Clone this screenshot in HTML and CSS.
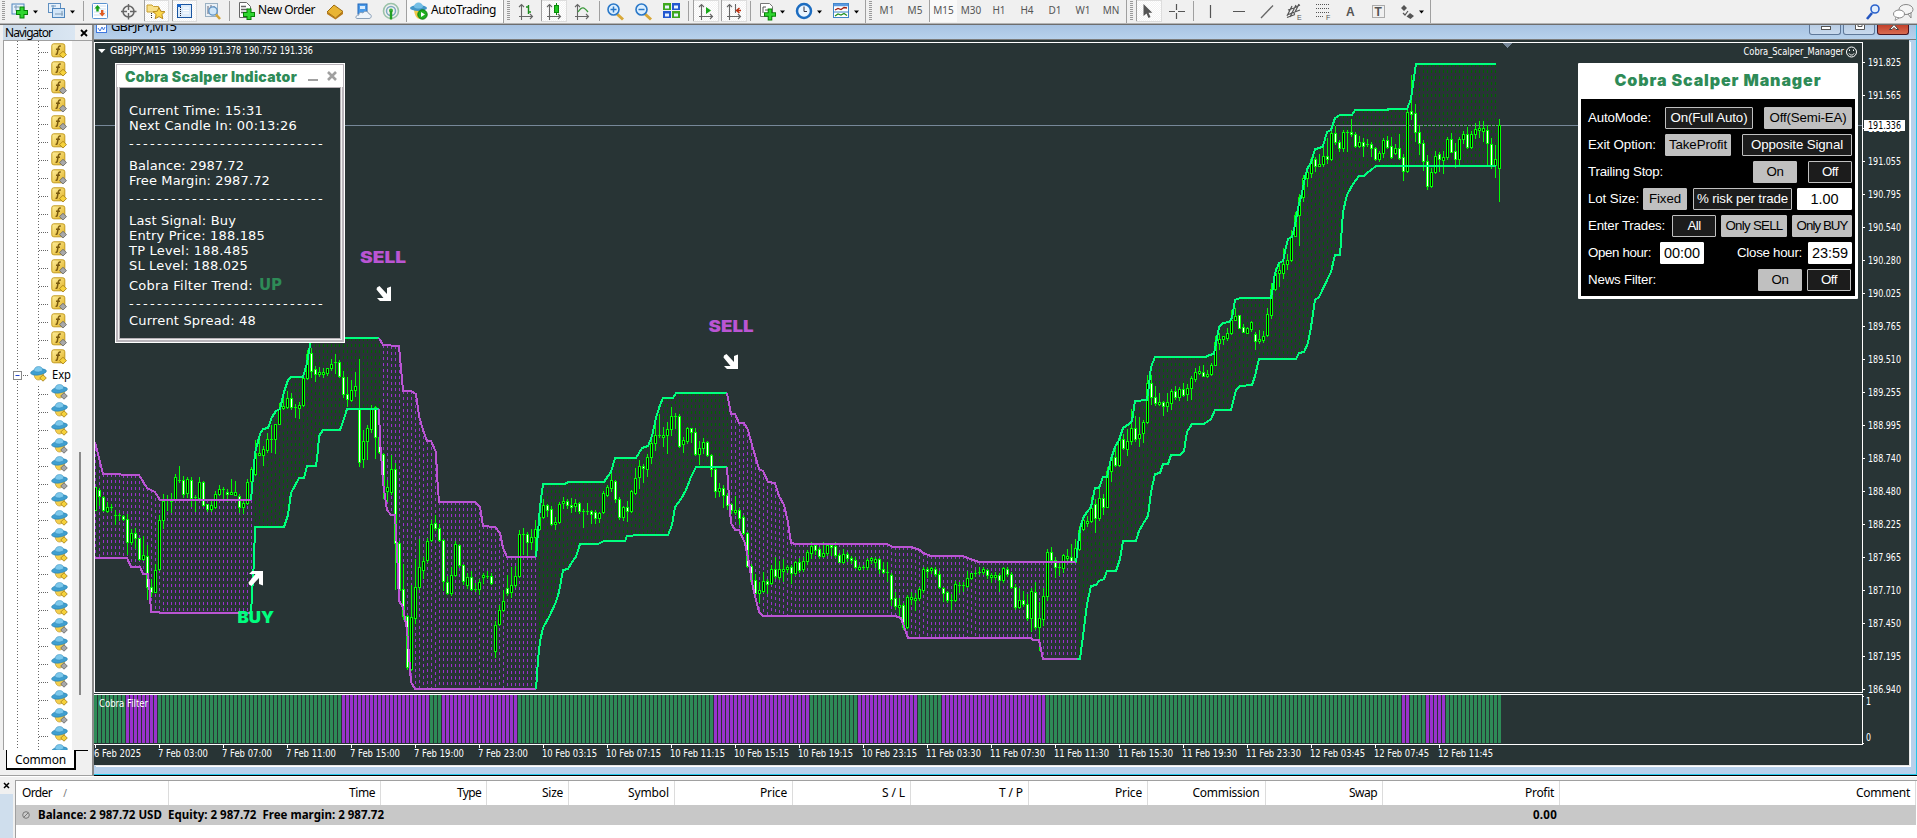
FILE: index.html
```html
<!DOCTYPE html>
<html lang="en">
<head>
<meta charset="utf-8">
<title>GBPJPY,M15</title>
<link rel="stylesheet" href="styles.css">
</head>
<body>
<svg width="0" height="0" class="defs">
  <defs>
    <linearGradient id="gold" x1="0" y1="0" x2="1" y2="1"><stop offset="0" stop-color="#fff0a0"/><stop offset="1" stop-color="#e0b020"/></linearGradient>
    <pattern id="chk" width="2" height="2" patternUnits="userSpaceOnUse"><rect width="2" height="2" fill="#f3f3f3"/><rect width="1" height="1" fill="#fff"/><rect x="1" y="1" width="1" height="1" fill="#fff"/></pattern>
    <symbol id="fx" viewBox="0 0 16 16">
      <rect x=".8" y=".8" width="13" height="13" rx="2" fill="url(#gold)" stroke="#c39a1c"/>
      <path d="M9.800 3.200c-2-.5-2.300.8-2.600 2.300l-.9 4.500c-.2 1-.7 1.500-1.700 1.200M5 6.200h4" fill="none" stroke="#7a5a10" stroke-width="1.500"/>
      <path d="M12 8.300l3.500 3.300-3.500 3.400-3.500-3.400z" fill="var(--dia)" stroke="var(--edge)" stroke-width=".8"/>
    </symbol>
    <symbol id="ea" viewBox="0 0 17 16">
      <path d="M4 7c0 4 1.500 7 4.500 7s5-3 5-7z" fill="#f4cf4c" stroke="#b28a1c" stroke-width=".6"/>
      <ellipse cx="8.500" cy="6" rx="8" ry="3" transform="rotate(-8 8.500 6)" fill="#3f9fd0" stroke="#1f78a8" stroke-width=".5"/>
      <path d="M4 5.200c0-3 1.800-4.700 4.500-4.700s4.200 1.500 4.200 4c-2 1.600-6 2-8.700.7z" fill="#7cc8ec" stroke="#2f88b8" stroke-width=".5"/>
      <path d="M13 8.800l3.300 3.200-3.300 3.200-3.300-3.200z" fill="var(--dia)" stroke="var(--edge)" stroke-width=".8"/>
    </symbol>
  </defs>
</svg>

<header class="toolbar">
  <svg width="236" height="24" viewBox="0 0 236 24">
    <path d="M3.500 1v20" class="grip"/>
    <rect x="12" y="4" width="12" height="10" fill="#e6f1fb" stroke="#4f86bd"/><path d="M14 7h5M16 5v6" stroke="#7a99b5"/>
    <path d="M16 12.500h12M22 6.500v12" stroke="#078007" stroke-width="5"/><path d="M17 12.500h10M22 7.500v10" stroke="#2fd52f" stroke-width="3"/>
    <path d="M33 10.500h5l-2.500 3z" fill="#000"/>
    <rect x="48.500" y="3.500" width="12" height="9" fill="#e6f1fb" stroke="#5f8fc0"/><path d="M51 6h5M53 5v6" stroke="#6f98c0"/>
    <rect x="52.500" y="8.500" width="12" height="9" fill="#d3e6f8" stroke="#4f86bd"/><path d="M55 14h8M62 11v5" stroke="#7a99b5"/>
    <path d="M70 10.500h5l-2.500 3z" fill="#000"/>
    <path d="M83.500 1v20" class="sep"/>
    <rect x="92.500" y="3.500" width="15" height="15" rx="1" fill="#fff" stroke="#5a93d0"/><path d="M94 6h12M94 9h12M94 12h12M94 15h12" stroke="#cfe0f2"/>
    <path d="M97.500 5l3 3.500h-1.800v3h-2.400v-3h-1.800z" fill="#12a012"/><path d="M101 10h2.400v3h1.800l-3 3.500-3-3.500h1.800z" fill="#e05a20"/>
    <circle cx="128.500" cy="11.500" r="5.500" fill="none" stroke="#666" stroke-width="1.500"/><path d="M128.500 4v6M128.500 13v6.500M121 11.500h6M130 11.500h6.500" stroke="#666" stroke-width="1.400"/>
    <rect x="144.500" y=".5" width="24" height="21" fill="url(#chk)" stroke="#ddd"/><path d="M144.500 0v21" class="sep"/>
    <path d="M147 5h5l1.500 1.500h5v5.500h-11.500z" fill="#f8e08a" stroke="#c9a030"/><path d="M151.500 13v6" stroke="#333" stroke-dasharray="1 1"/><path d="M159 7.500l1.800 3.800 4.200.4-3.100 2.800.9 4.200-3.800-2.100-3.800 2.100.9-4.200-3.100-2.800 4.200-.4z" fill="#fbd64a" stroke="#b98a1c"/>
    <rect x="172.500" y=".5" width="24" height="21" fill="url(#chk)" stroke="#ddd"/><path d="M172.500 0v21" class="sep"/>
    <rect x="177.500" y="4.500" width="14" height="13" fill="#dcebfa" stroke="#1a55a0"/><path d="M180.500 5v12" stroke="#223" stroke-dasharray="1 1"/><path d="M183 8h6M183 10.500h6M183 13h6" stroke="#fff"/><rect x="177" y="4" width="4" height="3" fill="#1a66c8"/>
    <rect x="205.500" y="3.500" width="12" height="13" fill="#e9f0f6" stroke="#9ab0c2"/><path d="M208 6v8M211 5v6M214 6v5" stroke="#667"/><circle cx="213" cy="11" r="4.200" fill="#cfe6f8" stroke="#5f93c4" stroke-width="1.300"/><path d="M216 14.500l4 4.500" stroke="#d3a53a" stroke-width="2.600"/>
    <path d="M229.500 1v20" class="sep"/>
  </svg>
  <button class="tool order"><svg width="18" height="18" viewBox="0 0 18 18"><path d="M1.500.5h7l4 4v11h-11z" fill="#fff" stroke="#666"/><path d="M3 4.500h5M3 7.500h7M3 10.500h6" stroke="#666" stroke-width="1.300"/><path d="M5 12.500h12M11 6.500v12" stroke="#078007" stroke-width="5"/><path d="M6 12.500h10M11 7.500v9.500" stroke="#2fd52f" stroke-width="3"/></svg><span data-w="57">New Order</span></button>
  <svg width="84" height="24" viewBox="322 0 84 24">
    <path d="M327 12l7-7 9 6.500-7.500 6.500z" fill="#e9b534" stroke="#9c6a10"/><path d="M327 12l8.500 6 7.500-6.500v2.500l-7.500 5.500-8.500-5.500z" fill="#b87b18"/>
    <rect x="358" y="4" width="9" height="10" fill="#4a9ae8" stroke="#2266b8"/><path d="M360 6h5v3h-5z" fill="#d8ecff"/><path d="M357 18.500h12c3 0 3-4.500 0-4.500-.5-3-5-3.500-6-1-3-1.500-4.500.5-4 2-3.500 0-4 3.500-2 3.500z" fill="#eef4fa" stroke="#8aa0b8"/>
    <circle cx="391" cy="11" r="7.500" fill="none" stroke="#9ac2a8" stroke-width="1.600"/><circle cx="391" cy="11" r="4.500" fill="none" stroke="#7ea8c0" stroke-width="1.500"/><circle cx="391" cy="10.500" r="2" fill="#3ab03a"/><path d="M391 11v8.500" stroke="#22a022" stroke-width="2.400"/>
  </svg>
  <button class="tool auto"><svg width="19" height="18" viewBox="0 0 19 18"><path d="M4 6c0 6 2 11 6 11s5-4 5-11z" fill="#f1c94a"/><ellipse cx="8.500" cy="6" rx="8.500" ry="3" fill="#4396c8"/><path d="M4 5c0-6 9-6 9 0-2 2-7 2-9 0z" fill="#74bfe6"/><circle cx="12.500" cy="12.500" r="4.700" fill="#1fae1f" stroke="#0c7d0c"/><path d="M11 10v5l4-2.500z" fill="#fff"/></svg><span data-w="65">AutoTrading</span></button>
  <svg width="370" height="24" viewBox="503 0 370 24">
    <path d="M503.500 0v23" class="sep"/><path d="M508.500 1v20" class="grip"/>
    <g stroke="#666" stroke-width="1.100" fill="none">
      <path d="M521.500 5v15M519 16.500h13M519 7l2.500-2.500L524 7M530 14l2.500 2.500L530 19"/>
      <path d="M577.500 5v15M575 16.500h13M575 7l2.500-2.500L580 7M586 14l2.500 2.500L586 19"/>
    </g>
    <path d="M528.500 5v9M526 7h2.500M528.500 12h2.500" stroke="#1c8a1c" stroke-width="1.400"/>
    <path d="M578 12c4-6 6-5 10 0" stroke="#3c9a3c" stroke-width="1.300" fill="none"/>
    <rect x="541.500" y=".5" width="25" height="21" fill="url(#chk)" stroke="#ddd"/><path d="M541.500 0v21" class="sep"/>
    <path d="M549.500 5v15M547 16.500h13M547 7l2.500-2.500L552 7M558 14l2.500 2.500L558 19" stroke="#666" stroke-width="1.100" fill="none"/><path d="M556.500 3v12" stroke="#0a8a0a"/><rect x="554.500" y="5.500" width="4" height="7" fill="#22c822" stroke="#0a8a0a"/>
    <path d="M599.500 1v20" class="sep"/>
    <path d="M617 14l6 5.500M645 14l6 5.500" stroke="#d8a838" stroke-width="3"/>
    <circle cx="613.500" cy="9.500" r="5.500" fill="#dcefff" stroke="#2a78c8" stroke-width="1.600"/><path d="M610.500 9.500h6M613.500 6.500v6" stroke="#2a78c8" stroke-width="1.500"/>
    <circle cx="641.500" cy="9.500" r="5.500" fill="#dcefff" stroke="#2a78c8" stroke-width="1.600"/><path d="M638.500 9.500h6" stroke="#2a78c8" stroke-width="1.500"/>
    <rect x="663" y="3" width="8" height="7" fill="#3ea81e"/><rect x="672" y="3" width="8" height="7" fill="#2358d0"/><rect x="663" y="11" width="8" height="7" fill="#2358d0"/><rect x="672" y="11" width="8" height="7" fill="#3ea81e"/><path d="M665 7h4M674 7h4M665 15h4M674 15h4" stroke="#e8f2ff" stroke-width="3"/>
    <path d="M688.500 1v20" class="sep"/>
    <rect x="693.500" y=".5" width="25" height="21" fill="url(#chk)" stroke="#ddd"/><path d="M693.500 0v21" class="sep"/><rect x="721.500" y=".5" width="25" height="21" fill="url(#chk)" stroke="#ddd"/><path d="M721.500 0v21" class="sep"/>
    <g stroke="#666" stroke-width="1.100" fill="none"><path d="M701.500 5v15M699 16.500h13M699 7l2.500-2.500L704 7M710 14l2.500 2.500L710 19M729.500 5v15M727 16.500h13M727 7l2.500-2.500L732 7M738 14l2.500 2.500L738 19M735.500 4v9"/></g>
    <path d="M706 7v7l5-3.500z" fill="#18a818"/><path d="M741 10.500h-4M739.500 8l-3 2.500 3 2.500" stroke="#c03010" stroke-width="1.400" fill="none"/>
    <path d="M750.500 1v20" class="sep"/>
    <path d="M760.500 3.500h9l3 3v10h-12z" fill="#fff" stroke="#777"/><path d="M763 13v-6h3M765 10h3" stroke="#555" fill="none"/><path d="M764 14.500h12M770 8.500v12" stroke="#078007" stroke-width="4.600"/><path d="M765 14.500h10M770 9.500v10" stroke="#2fd52f" stroke-width="2.600"/>
    <path d="M780 10.500h5l-2.500 3zM817 10.500h5l-2.500 3zM854 10.500h5l-2.500 3z" fill="#000"/>
    <circle cx="804" cy="11" r="7" fill="#eaf5ff" stroke="#1c6cc0" stroke-width="2.500"/><path d="M804 6.500v5h3" stroke="#334" fill="none"/>
    <rect x="833.500" y="3.500" width="15" height="14" fill="#fff" stroke="#3f84c8"/><path d="M834 5h14" stroke="#5a9ae0" stroke-width="2.500"/><path d="M835 10l3-1.500 3 1 3-2 3 .5" stroke="#a02010" fill="none" stroke-width="1.300"/><path d="M834 12h14" stroke="#3f84c8"/><path d="M835 16l3-2 3 1 3-1.500 3 2" stroke="#209020" fill="none" stroke-width="1.300"/>
    <path d="M865.500 0v23" class="sep"/><path d="M870.500 1v20" class="grip"/>
  </svg>
  <nav class="frames"><span>M1</span><span>M5</span><span class="on">M15</span><span>M30</span><span>H1</span><span>H4</span><span>D1</span><span>W1</span><span>MN</span></nav>
  <svg width="308" height="24" viewBox="1125 0 308 24">
    <path d="M1126.500 0v23" class="sep"/><path d="M1131.500 1v20" class="grip"/>
    <rect x="1136.500" y=".5" width="25" height="21" fill="url(#chk)" stroke="#ddd"/><path d="M1136.500 0v21" class="sep"/>
    <path d="M1143.500 4v12l3-2.500 2 4.500 2-1-2-4.300h3.800z" fill="#555"/>
    <path d="M1176.500 4v6M1176.500 13v6M1169 11.500h6M1178 11.500h7M1210.500 5v13M1233 11.500h12" stroke="#555" stroke-width="1.200"/>
    <path d="M1193.500 1v20" class="sep"/>
    <path d="M1261 18l12-12.500" stroke="#666" stroke-width="1.300"/>
    <path d="M1287 15l13-5M1287 17.500l8-3M1287 16l5-10M1290 17l6-12M1294 14l5-10M1288 10l6-2M1294 8l6-3" stroke="#555" stroke-width="1.200"/>
    <path d="M1316 4.500h13M1316 8.500h13M1316 12.500h13M1316 16.500h8" stroke="#555" stroke-dasharray="1 1"/>
    <g class="tl"><text x="1297" y="20" font-size="7">E</text><text x="1326" y="20" font-size="7">F</text><text x="1346" y="16" font-size="12" font-weight="700">A</text><text x="1374.500" y="16" font-size="12" font-weight="700">T</text></g>
    <rect x="1372.500" y="5.500" width="12" height="12" fill="none" stroke="#666" stroke-dasharray="1 1"/>
    <path d="M1404 5l3 3-3 3-3-3zM1410 13l4 3-3.500 3-4-2.500z" fill="#555"/><path d="M1403 13l2 2 3-4" stroke="#555" fill="none" stroke-width="1.200"/>
    <path d="M1419 10.500h5l-2.500 3z" fill="#000"/><path d="M1430.500 0v23" class="sep"/>
  </svg>
  <svg class="right" width="60" height="24" viewBox="1857 0 60 24">
    <path d="M1872 13l-5 6" stroke="#2456c0" stroke-width="2.600"/><circle cx="1875" cy="9" r="4" fill="#e2eefc" stroke="#2a62cc" stroke-width="1.600"/>
    <ellipse cx="1906" cy="9.500" rx="7" ry="5" fill="#f4f4f4" stroke="#888"/><path d="M1908 14l3 4v-5z" fill="#f4f4f4" stroke="#888"/><ellipse cx="1899" cy="14" rx="5.500" ry="4" fill="#fff" stroke="#888"/><path d="M1896 17l-1 3.500 4-2.500z" fill="#fff" stroke="#888" stroke-width=".8"/>
  </svg>
</header>

<main class="work">
  <aside class="navigator">
    <div class="nav-head"><span data-w="47">Navigator</span><svg width="8" height="8" viewBox="0 0 8 8"><path d="M1 1l6 6M7 1L1 7" stroke="#000" stroke-width="1.800"/></svg></div>
    <div class="nav-body">
      <div class="tree" id="tree"></div>
      <div class="scroll"><i></i></div>
    </div>
    <div class="nav-tabs"><span class="tab"><b data-w="51">Common</b></span></div>
  </aside>

  <section class="window">
    <div class="titlebar">
      <svg width="11" height="10" viewBox="0 0 11 10"><rect x=".5" y="-1.500" width="10" height="9" fill="#fff" stroke="#3f78e0"/><path d="M2 3l2 3 2-4 1.500 3L9 2" fill="none" stroke="#3f78e0"/></svg>
      <span data-w="65">GBPJPY,M15</span>
      <div class="winbtns"><i><svg width="12" height="6"><rect x="1.500" y="1.500" width="9" height="3" fill="#fff" stroke="#555"/></svg></i><i><svg width="12" height="6"><path d="M1.500-2v6.500h9V-2M4 0v1.500h4V0" fill="#fff" stroke="#555"/></svg></i><i class="close"><svg width="12" height="6"><path d="M1.500 4.500L6-.5l4.500 5H8L6 2.500 4 4.500z" fill="#fff" stroke="#444"/></svg></i></div>
    </div>
    <div class="chart">
      <svg id="plot" width="1815" height="725" viewBox="94 40 1815 725"></svg>

      <div class="panel indicator">
        <div class="ind-title"><span data-w="172">Cobra Scalper Indicator</span><i class="min"></i><svg width="10" height="10" viewBox="0 0 10 10"><path d="M1 1l8 8M9 1L1 9" stroke="#a0a0a0" stroke-width="2.600"/></svg></div>
        <div class="ind-body">
          <p data-w="134">Current Time: 15:31</p>
          <p data-w="168">Next Candle In: 00:13:26</p>
          <p class="rule" data-w="196">----------------------------</p>
          <p class="gap" data-w="115">Balance: 2987.72</p>
          <p data-w="141">Free Margin: 2987.72</p>
          <p class="rule" data-w="196">----------------------------</p>
          <p class="gap" data-w="107">Last Signal: Buy</p>
          <p data-w="136">Entry Price: 188.185</p>
          <p data-w="120">TP Level: 188.485</p>
          <p data-w="119">SL Level: 188.025</p>
          <p class="trend"><span data-w="124">Cobra Filter Trend:</span><b data-w="23">UP</b></p>
          <p class="rule" data-w="196">----------------------------</p>
          <p class="last" data-w="127">Current Spread: 48</p>
        </div>
      </div>

      <div class="panel manager">
        <h1><span data-w="207">Cobra Scalper Manager</span></h1>
        <div class="mgr-body">
          <div class="row"><label data-w="63">AutoMode:</label><i class="fill"></i><span class="btn w88"><b data-w="77">On(Full Auto)</b></span><span class="btn w88 on g11"><b data-w="77">Off(Semi-EA)</b></span></div>
          <div class="row"><label data-w="68">Exit Option:</label><i class="fill"></i><span class="btn w66 on"><b data-w="58">TakeProfit</b></span><span class="btn w110 g11"><b data-w="92">Opposite Signal</b></span></div>
          <div class="row"><label data-w="75">Trailing Stop:</label><i class="fill"></i><span class="btn w44 on"><b data-w="17">On</b></span><span class="btn w44 g11"><b data-w="16">Off</b></span></div>
          <div class="row"><label data-w="51">Lot Size:</label><i class="fill"></i><span class="btn w44 on"><b data-w="32">Fixed</b></span><span class="btn w99 g6"><b data-w="91">% risk per trade</b></span><span class="edit w55 g5"><b data-w="28">1.00</b></span></div>
          <div class="row"><label data-w="77">Enter Trades:</label><i class="fill"></i><span class="btn w44"><b data-w="13">All</b></span><span class="btn w66 on g5"><b data-w="57">Only SELL</b></span><span class="btn w60 on g5"><b data-w="51">Only BUY</b></span></div>
          <div class="row"><label data-w="63">Open hour:</label><span class="edit w44 g9"><b data-w="36">00:00</b></span><i class="fill"></i><label data-w="65">Close hour:</label><span class="edit w44 g6"><b data-w="36">23:59</b></span></div>
          <div class="row news"><label data-w="68">News Filter:</label><i class="fill"></i><span class="btn w44 on"><b data-w="17">On</b></span><span class="btn w44 g5"><b data-w="16">Off</b></span></div>
        </div>
      </div>
    </div>
    <div class="frame-bottom"></div>
  </section>
</main>

<footer class="terminal">
  <div class="side"><svg width="7" height="7" viewBox="0 0 7 7"><path d="M1 1l5 5M6 1L1 6" stroke="#000" stroke-width="1.500"/></svg><i></i></div>
  <div class="table">
    <div class="thead">
      <span class="c0"><b data-w="30">Order</b> <em>/</em></span><span class="c1"><b data-w="26">Time</b></span><span class="c2"><b data-w="24">Type</b></span><span class="c3"><b data-w="21">Size</b></span><span class="c4"><b data-w="41">Symbol</b></span><span class="c5"><b data-w="27">Price</b></span><span class="c5"><b data-w="23">S / L</b></span><span class="c5"><b data-w="24">T / P</b></span><span class="c6"><b data-w="27">Price</b></span><span class="c7"><b data-w="67">Commission</b></span><span class="c7"><b data-w="28">Swap</b></span><span class="c8"><b data-w="29">Profit</b></span><span class="c9"><b data-w="54">Comment</b></span>
    </div>
    <div class="balance"><svg width="8" height="8" viewBox="0 0 8 8"><circle cx="4" cy="4" r="3.300" fill="#ccc" stroke="#777"/><path d="M2 6l4-4" stroke="#777"/></svg><span data-w="346">Balance: 2 987.72 USD&nbsp; Equity: 2 987.72&nbsp; Free margin: 2 987.72</span><span class="profit" data-w="24">0.00</span></div>
  </div>
</footer>
<script src="chart.js"></script>
</body>
</html>
```

FILE: styles.css
```css
* { box-sizing: border-box; }
html, body { margin: 0; width: 1917px; height: 838px; overflow: hidden; background: #f0f0f0; }
body { display: flex; flex-direction: column; font: 12px "Noto Sans", "Open Sans", sans-serif; color: #000; white-space: nowrap; }
.defs { position: absolute; }
svg { display: block; flex: none; }
p, h1 { margin: 0; }
b, em, i { font-weight: inherit; font-style: normal; }
[data-w] { display: inline-block; }

/* toolbar */
.toolbar { height: 25px; flex: none; display: flex; background: #f0f0f0; border-bottom: 1px solid #6e6e6e; box-shadow: inset 0 -1px #b4b4b4; }
.sep { stroke: #a0a0a0; stroke-width: 1; }
.grip { stroke: #9a9a9a; stroke-width: 3; stroke-dasharray: 1 1; }
.tool { border: 0; background: none; margin: 0; padding: 0; font: inherit; height: 22px; display: flex; align-items: center; }
.tool span { line-height: 20px; margin-bottom: 3px; }
.order { width: 86px; padding-left: 2px; gap: 2px; }
.auto { width: 97px; padding-left: 3px; gap: 2px; background: #f8f8f8; border-left: 1px solid #a0a0a0; border-right: 1px solid #fff; }
.frames { display: flex; align-items: flex-start; width: 252px; font: 10px "Noto Sans", sans-serif; color: #555; }
.frames span { width: 28px; height: 22px; line-height: 21px; text-align: center; }
.frames .on { background: #f9f9f9; border-left: 1px solid #a0a0a0; }
.right { margin-left: auto; }
.tl text { fill: #555; font-family: "Liberation Sans", sans-serif; }

/* navigator */
.work { height: 751px; flex: none; display: flex; }
.navigator { width: 94px; flex: none; display: flex; flex-direction: column; border-right: 2px solid #8a8a8a; border-bottom: 1px solid #a0a0a0; padding-left: 3px; background: #f0f0f0; }
.nav-head { height: 15px; flex: none; display: flex; align-items: center; padding: 0 4px 0 2px; line-height: 13px; background: linear-gradient(90deg, #c9d9e8, #dae6f2 72px, #f0f0f0 72px); }
.nav-head svg { margin-left: auto; }
.nav-body { height: 710px; flex: none; display: flex; border-left: 1px solid #a0a0a0; border-top: 1px solid #a0a0a0; }
.tree { width: 68px; background: #fff; overflow: hidden; }
.scroll { flex: 1; padding: 411px 0 0 7px; margin-right: 3px; }
.scroll i { display: block; width: 2px; height: 243px; background: #8a8a8a; }
.nav-tabs { height: 20px; margin-right: 4px; background: linear-gradient(#000, #000) 70px 0 / 20px 1px no-repeat; }
.tab { display: block; width: 70px; margin-left: 3px; height: 20px; background: #fff; border: solid #000; border-width: 0 2px 2px 1px; text-align: center; line-height: 19px; font-size: 12px; }

/* chart window */
.window { width: 1823px; display: flex; flex-direction: column; background: #b7d1ec; border-right: 1px solid #22c8ea; }
.titlebar { height: 15px; flex: none; display: flex; background: linear-gradient(#a8c3e2, #b7d1ec); border-bottom: 1px solid #7b7b7b; overflow: hidden; line-height: 15px; font-size: 13px; padding: 0 7px 0 2px; gap: 4px; }
.titlebar > span { margin-top: -6px; }
.winbtns { margin-left: auto; display: flex; gap: 2px; }
.winbtns i { width: 32px; height: 10px; border: 1px solid #5f7899; border-top: 0; border-radius: 0 0 3px 3px; background: linear-gradient(#b9cde4, #c9daee); padding-left: 10px; }
.winbtns .close { background: linear-gradient(#c2412b, #d86a50); border-color: #4a1420; }
.chart { position: relative; width: 1815px; height: 725px; background: #283435; box-shadow: 1px 1px #e8e8e8, 2px 2px #fff; }
.frame-bottom { height: 9px; margin-top: auto; margin-right: -1px; border-bottom: 1px solid #000; box-shadow: inset 0 -1px #22c8ea; }
#plot { shape-rendering: crispEdges; }
#plot text { fill: #fff; font: 11px "DejaVu Sans Condensed", "Noto Sans", sans-serif; }
#plot text.sig { font: 900 16px Inter, "Liberation Sans", sans-serif; }
#plot .soft { shape-rendering: auto; }

/* indicator panel */
.panel { position: absolute; }
.indicator { left: 21px; top: 23px; width: 230px; height: 280px; border: 1px solid #fff; padding: 1px; background: #b9b4ba; }
.indicator::before { content: ""; position: absolute; inset: 2px; background: #f0f0f0; }
.ind-title { position: relative; height: 22px; background: #fff; display: flex; align-items: center; padding: 0 6px 0 8px; color: #2e8b57; font: 900 14px Inter, sans-serif; }
.ind-title .min { width: 10px; height: 2px; background: #a0a0a0; margin-left: 11px; margin-top: 7px; }
.ind-title svg { margin-left: auto; }
.ind-body { position: relative; display: flex; flex-direction: column; align-items: flex-start; margin: 0 2px; height: 252px; border: 1px solid #b5b0b5; background: #283435; padding: 15px 0 0 9px; color: #fff; font: 13px/15px "DejaVu Sans", sans-serif; }
.ind-body p { height: 15px; flex: none; }
.ind-body .rule { margin-top: 3px; }
.ind-body .gap { margin-top: 7px; }
.ind-body .trend { margin-top: 5px; display: flex; gap: 6px; }
.ind-body .trend b { color: #2e8b57; font: 900 15px/14px "DejaVu Sans", sans-serif; }
.ind-body .last { margin-top: 2px; }

/* manager panel */
.manager { left: 1484px; top: 23px; width: 280px; height: 236px; background: #fff; border-radius: 1px; padding: 0 3px 3px; }
.manager h1 { height: 36px; line-height: 35px; text-align: center; color: #2e8b57; font-family: Inter, sans-serif; font-weight: 900; font-size: 16px; }
.mgr-body { height: 197px; background: #000; padding: 8px 3px 0 7px; display: flex; flex-direction: column; gap: 5px; color: #fff; font: 13.3px/20px "Liberation Sans", sans-serif; }
.row { display: flex; height: 22px; align-items: center; }
.fill { flex: 1; }
.btn, .edit { height: 22px; border: 1px solid #c0c0c0; background: #1c1c1c; border-radius: 1px; text-align: center; flex: none; }
.btn.on { background: #c0c0c0; color: #000; }
.edit { background: #fff; border-color: #fff; color: #000; font-size: 14.5px; }
.news { padding-right: 1px; }
.w44 { width: 44px; } .w55 { width: 55px; } .w60 { width: 60px; } .w66 { width: 66px; }
.w88 { width: 88px; } .w99 { width: 99px; } .w110 { width: 110px; }
.g5 { margin-left: 5px; } .g6 { margin-left: 6px; } .g9 { margin-left: 9px; } .g11 { margin-left: 11px; }

/* terminal */
.terminal { flex: 1; display: flex; padding-top: 4px; background: #f0f0f0; box-shadow: inset 0 1px #fff; }
.side { width: 15px; flex: none; display: flex; flex-direction: column; }
.side svg { margin: 2px 0 5px 3px; }
.side i { flex: 1; width: 13px; background: #cfdeed; }
.table { flex: 1; border-left: 1px solid #a0a0a0; border-top: 1px solid #a0a0a0; background: #fff; }
.thead { display: flex; height: 24px; line-height: 24px; }
.thead span { flex: none; border-right: 1px solid #dcdcdc; padding-right: 5px; text-align: right; }
.thead .c0 { width: 153px; text-align: left; padding-left: 6px; }
.thead em { color: #777; margin-left: 8px; font-size: 10px; }
.c1 { width: 212px; } .c2 { width: 106px; } .c3 { width: 82px; } .c4 { width: 106px; }
.c5 { width: 118px; } .c6 { width: 119px; } .c7 { width: 117.5px; } .c8 { width: 177px; } .c9 { width: 356px; }
.balance { height: 20px; background: #c8c8c8; display: flex; align-items: center; font: 700 11.5px/18px "Noto Sans", sans-serif; padding-left: 6px; padding-bottom: 1px; gap: 8px; width: 1900px; }
.balance .profit { margin-left: auto; margin-right: 359px; }
```

FILE: chart.js
```js
// Spread letters so that each label fills its nominal width.
for (const el of document.querySelectorAll('[data-w]')) {
  const natural = el.getBoundingClientRect().width;
  const w = +el.dataset.w;
  el.style.letterSpacing = ((w - natural) / el.textContent.length) + 'px';
}

// Navigator tree
const YEL = '--dia:#f6d23c;--edge:#a37c14', GRY = '--dia:#a8a8a8;--edge:#666';
const fx = 'yygggyyggyggggygggy'.slice(0, 5) + 'yggyggggygggy', ea = 'gyygggyyyyyyyggggygyg';
let t = '<svg width="68" height="709" viewBox="4 41 68 709"><g stroke="#666" stroke-dasharray="1 2">' +
  '<path d="M17.5 41v329M17.500 381v369M38.500 41v319M38.500 386v364"/></g>';
[...fx].forEach((c, i) => {
  const y = 50 + 18 * i;
  t += `<path d="M39 ${y + 2.5}h10" stroke="#666" stroke-dasharray="1 1"/><use href="#fx" x="51" y="${y - 7}" width="16" height="16" style="${c === 'y' ? YEL : GRY}"/>`;
});
t += '<path d="M21 375.500h8" stroke="#666" stroke-dasharray="1 1"/><rect x="13.500" y="371.500" width="8" height="8" fill="#fff" stroke="#888"/><path d="M15.500 375.500h4" stroke="#24c"/>' +
  `<use href="#ea" x="30" y="366" width="17" height="16" style="${YEL}"/><text x="52" y="379" font-size="12" textLength="19" lengthAdjust="spacingAndGlyphs">Exp</text>`;
[...ea].forEach((c, i) => {
  const y = 392 + 18 * i;
  t += `<path d="M39 ${y + 2.5}h10" stroke="#666" stroke-dasharray="1 1"/><use href="#ea" x="51" y="${y - 8}" width="17" height="16" style="${c === 'y' ? YEL : GRY}"/>`;
});
document.getElementById('tree').innerHTML = t + '</svg>';

// Channel bands: alternating trend segments, points are x,y pairs.
const P = '#ba55d3', G = '#00ff7f';
const upper = [
  [P, [95,442, 103,474, 139,475, 147,488, 155,492, 160,500, 251,500]],
  [G, [251,500, 255,453, 260,434, 263,429, 268,428, 272,417, 276,411, 280,409, 284,392, 288,380, 291,377, 303,377, 307,363, 310,345, 312,338, 379,338]],
  [P, [379,338, 383,345, 399,346, 401,368, 403,391, 411,391, 416,394, 419,416, 423,430, 427,441, 431,441, 436,452, 437,475, 439,502, 475,502, 480,507, 483,526, 495,527, 500,533, 503,548, 507,557, 536,557]],
  [G, [536,557, 540,507, 543,484, 565,484, 568,482, 604,482, 608,476, 611,472, 615,458, 636,458, 642,448, 648,446, 652,436, 656,418, 660,405, 663,398, 673,398, 676,393, 727,393]],
  [P, [727,393, 731,414, 735,414, 739,423, 744,423, 748,430, 752,445, 759,469, 763,471, 768,482, 775,483, 779,496, 784,505, 788,522, 791,543, 796,544, 887,544, 893,547, 911,547, 920,550, 923,553, 931,556, 963,556, 970,559, 979,562, 1076,562]],
  [G, [1076,562, 1080,529, 1083,518, 1087,512, 1091,507, 1095,488, 1099,488, 1103,477, 1107,477, 1111,459, 1115,447, 1119,440, 1123,428, 1129,424, 1132,421, 1135,401, 1147,400, 1149,385, 1151,367, 1155,357, 1206,357, 1209,355, 1214,354, 1219,327, 1223,323, 1229,322, 1232,318, 1235,300, 1240,298, 1271,298, 1273,287, 1275,273, 1279,263, 1283,261, 1286,247, 1288,239, 1292,237, 1295,225, 1298,208, 1302,193, 1305,177, 1308,167, 1311,163, 1315,149, 1320,148, 1323,146, 1327,132, 1331,130, 1335,118, 1340,115, 1352,115, 1355,110, 1388,110, 1388,109, 1407,109, 1411,99, 1414,77, 1416,64, 1496,64]]
];
const lower = [
  [P, [95,558, 127,558, 131,567, 140,567, 143,574, 148,574, 150,595, 151,612, 159,612, 160,613, 251,613]],
  [G, [251,613, 254,560, 255,527, 284,527, 288,515, 291,493, 299,478, 304,478, 307,466, 316,466, 318,450, 319,436, 323,430, 340,430, 344,419, 347,409, 379,409]],
  [P, [379,409, 380,440, 383,482, 387,510, 391,515, 395,515, 397,550, 399,601, 403,607, 407,630, 409,655, 411,682, 415,689, 536,689]],
  [G, [536,689, 538,660, 540,641, 543,628, 550,615, 556,602, 559,592, 563,570, 568,569, 572,562, 576,557, 580,544, 598,544, 604,541, 625,541, 627,536, 640,535, 668,535, 672,525, 675,507, 681,499, 686,490, 691,477, 696,467, 727,467]],
  [P, [727,467, 729,497, 731,523, 735,530, 739,530, 745,543, 749,563, 752,583, 756,600, 759,612, 763,616, 895,616, 901,618, 908,638, 1031,638, 1033,640, 1039,640, 1043,659, 1077,659]],
  [G, [1077,659, 1080,659, 1083,636, 1087,604, 1091,586, 1096,585, 1099,581, 1104,579, 1107,571, 1116,571, 1120,559, 1123,541, 1136,541, 1139,531, 1143,524, 1148,516, 1151,492, 1155,474, 1160,473, 1163,464, 1168,464, 1171,455, 1180,455, 1184,451, 1187,432, 1192,424, 1204,424, 1211,419, 1215,410, 1231,410, 1236,390, 1240,386, 1252,385, 1255,376, 1259,359, 1296,359, 1299,353, 1304,352, 1308,343, 1311,327, 1315,300, 1319,297, 1331,272, 1335,255, 1340,255, 1343,212, 1347,195, 1353,184, 1359,176, 1364,176, 1367,173, 1371,170, 1376,166, 1496,166]]
];

// Candles, one per 4px bar: high, body top, body bottom, low; "-" prefix marks a falling bar.
const bars = `487 487 510 510,-488 490 496 505,-496 497 510 511,502 507 511 512,504 507 508 510,510 515 516 524,513 515 516 520,-515 516 519 520,-514 519 542 554,529 533 542 544,-528 533 538 548,-538 538 559 560,536 555 559 560,-545 556 587 599,-579 587 592 596,564 570 592 592,515 520 569 570,494 501 520 528,495 500 501 510,493 499 501 512,474 477 499 500,466 480 481 482,-476 480 494 497,477 479 493 497,-477 480 498 506,495 497 498 511,477 482 498 500,-481 482 505 506,-504 504 509 511,501 505 509 511,491 494 507 508,485 489 494 495,487 489 490 500,-489 492 494 501,479 492 494 494,481 492 495 495,-494 496 507 512,501 503 507 513,479 482 503 504,467 469 481 482,440 453 474 475,433 453 455 455,446 449 455 465,433 439 450 452,425 439 440 452,424 424 439 453,403 409 424 424,392 406 408 409,391 398 407 408,-393 398 407 409,404 407 408 417,402 405 408 418,375 378 405 406,350 354 378 379,-348 353 371 377,-366 369 374 381,367 372 374 376,368 372 374 377,368 368 373 375,359 364 368 370,354 362 363 373,-360 362 376 377,-371 377 394 397,-377 394 399 406,380 390 400 401,372 386 390 396,-359 409 462 466,430 441 459 467,425 428 441 459,405 409 429 432,-406 407 437 458,-432 437 452 453,-453 454 485 498,480 487 491 501,455 469 492 494,-463 469 543 589,-541 543 590 602,-564 589 616 619,-615 616 667 669,585 617 669 670,559 587 618 623,539 567 587 589,557 561 570 578,538 541 560 562,520 524 540 541,-515 523 528 530,-524 528 540 541,-539 540 581 590,-576 582 593 594,567 575 593 595,541 544 575 576,-544 545 565 567,-564 565 581 584,573 577 585 588,-571 577 589 590,583 589 590 591,579 582 589 594,573 575 577 583,571 576 577 578,-573 576 583 584,621 625 651 657,605 610 624 625,590 601 610 611,-575 588 593 595,567 585 592 597,566 576 585 587,530 534 576 577,528 534 535 554,-532 534 542 557,529 537 542 549,520 529 537 557,512 517 529 530,499 505 517 518,-504 505 510 516,-506 509 524 525,517 522 524 529,502 504 522 523,497 501 503 508,-499 501 505 508,-498 505 507 512,499 503 506 511,-502 503 511 513,509 511 512 527,503 511 512 514,-510 511 514 523,-510 512 518 523,512 513 518 522,491 493 512 513,485 487 495 496,473 480 488 491,-480 481 499 502,-497 499 517 519,506 507 517 520,-501 507 511 521,490 491 511 512,468 478 493 494,460 466 477 488,-464 466 468 482,454 457 469 476,439 443 457 463,421 435 443 450,414 435 436 437,427 435 437 446,422 429 435 453,407 416 429 435,413 416 417 428,-414 416 446 447,437 440 444 452,427 428 441 443,-428 428 432 442,-428 432 454 455,441 448 454 464,438 442 448 453,-441 442 455 456,-454 455 469 476,-468 469 491 497,483 488 491 496,-485 488 495 507,-493 495 505 509,-503 504 510 513,496 510 512 514,-508 510 518 524,-515 517 533 534,-532 533 566 567,-564 566 581 584,-574 580 593 594,582 590 593 602,572 581 591 592,-579 581 584 593,565 569 583 584,-557 569 576 578,561 569 577 579,559 569 571 581,565 567 569 572,-565 567 573 583,561 562 573 575,-558 562 570 572,557 561 569 571,550 552 561 564,542 546 553 558,-544 545 550 554,-547 549 556 558,542 553 556 557,544 545 553 555,-543 545 547 555,-542 546 555 557,-553 555 562 562,549 554 562 563,-552 554 558 561,-556 558 560 563,-557 560 567 568,565 567 569 570,565 567 568 569,558 560 567 569,557 558 560 563,557 559 562 567,-558 559 569 573,-562 569 572 573,562 572 573 581,-573 575 599 605,-592 598 606 609,598 605 607 615,-603 605 627 629,595 597 627 628,592 597 599 604,593 598 600 610,587 589 598 600,567 569 590 592,-567 569 571 577,567 568 570 573,-567 569 574 576,-571 574 587 588,-587 588 593 601,-591 592 600 602,594 600 601 609,581 584 600 601,582 585 586 592,582 585 586 591,571 578 586 587,573 573 578 579,570 573 574 576,567 572 573 574,567 569 572 574,-569 570 575 578,573 575 577 582,572 575 577 579,-573 575 580 591,567 568 580 582,-567 569 574 576,-572 574 587 588,-584 587 607 609,588 600 607 608,-591 600 604 606,-594 604 618 620,588 591 618 631,-582 592 627 629,602 618 627 650,588 596 619 625,549 552 596 600,-547 552 560 561,-557 560 567 577,562 567 568 575,554 555 568 572,549 556 558 561,-544 557 562 563,539 548 562 562,526 530 549 550,518 520 529 530,516 521 523 526,497 508 521 522,-499 504 518 532,488 498 518 520,-494 498 507 514,467 471 507 507,455 457 471 481,-447 457 465 466,437 439 465 466,-434 439 448 449,429 441 449 455,409 428 441 444,-416 428 439 441,417 434 438 446,420 422 433 442,375 383 422 423,-375 383 397 404,-386 397 403 405,393 402 404 405,-401 402 406 415,393 402 406 411,389 391 403 409,-386 391 397 399,387 389 397 400,-383 389 395 396,384 388 394 400,376 378 388 399,368 372 379 381,366 371 373 374,-365 372 376 376,370 374 376 377,363 365 374 375,336 342 365 365,333 339 343 349,336 336 339 344,328 333 338 340,310 320 333 334,308 316 320 320,-315 315 328 328,-324 327 332 332,327 328 333 333,321 322 329 331,-332 334 341 349,330 339 341 343,331 336 340 342,308 314 335 336,283 289 315 318,268 273 289 290,262 270 273 286,248 264 273 278,254 260 264 269,230 236 260 261,212 215 236 236,194 197 215 245,175 178 197 201,166 172 178 186,157 159 173 177,-157 159 166 171,154 164 166 166,145 156 164 166,-138 156 159 163,130 133 159 160,-126 133 142 144,-140 142 148 151,130 132 148 151,130 132 133 151,-119 132 134 136,-132 134 146 147,136 142 146 147,-138 142 146 156,139 144 145 146,-142 144 148 156,-147 148 159 160,151 153 159 161,138 140 153 157,-136 140 147 148,-137 146 157 158,144 148 153 154,-134 148 158 159,-154 157 171 180,110 112 171 172,-75 111 114 119,-104 113 132 141,-125 132 143 154,-140 143 161 170,-155 161 186 189,168 172 186 187,151 156 172 173,-152 154 159 171,151 157 160 173,137 139 157 159,-133 139 152 152,-143 151 159 167,137 139 159 165,131 134 139 143,-127 134 147 148,131 134 147 148,123 129 134 138,121 128 130 137,121 128 131 141,-125 130 143 164,-138 144 165 168,145 159 165 177,119 125 168 201`
  .split(',').map(s => ({ down: s[0] === '-', v: s.replace('-', '').split(' ').map(Number) }));

const at = (segs, x) => {
  for (const [c, p] of segs)
    for (let i = 0; i + 3 < p.length; i += 2)
      if (x >= p[i] && x <= p[i + 2] && p[i + 2] > p[i])
        return { c, y: p[i + 1] + (p[i + 3] - p[i + 1]) * (x - p[i]) / (p[i + 2] - p[i]) };
};
const rect = (x, y, w, h, f) => `<rect x="${x}" y="${y}" width="${w}" height="${h}" fill="${f}"/>`;
const label = (x, y, w, s, extra = '') => `<text x="${x}" y="${y}" textLength="${w}" lengthAdjust="spacingAndGlyphs" ${extra}>${s}</text>`;
let s = '';

// current price line
s += rect(94, 125, 1768, 1, '#778899');

// dashed channel fill
for (let x = 95; x <= 1496; x += 4) {
  const u = at(upper, x), l = at(lower, x);
  if (!u || !l) continue;
  s += `<path d="M${x + .5} ${Math.round(u.y)}V${Math.round(l.y)}" stroke="${l.c === P ? '#9932cc' : '#006400'}" stroke-dasharray="3 3"/>`;
}
// candles
bars.forEach((b, k) => {
  const x = 95 + 4 * k, [h, t, m, l] = b.v;
  if (m - t <= 1) { s += rect(x, h, 1, l - h + 1, '#0f0') + rect(x - 1, t, 3, 1, '#0f0'); return; }
  s += rect(x, h, 1, t - h, '#0f0') + rect(x, m, 1, l - m + 1, '#0f0') + rect(x - 1, t, 3, m - t + 1, '#0f0') +
    rect(x, t + 1, 1, m - t - 1, b.down ? '#fff' : '#000');
});
// channel borders
for (const segs of [upper, lower]) for (const [c, p] of segs)
  s += `<polyline points="${p.join(' ')}" fill="none" stroke="${c}" stroke-width="2"/>`;

// trend histogram
const falling = [[8, 15], [62, 83], [87, 105], [155, 178], [191, 205], [212, 237], [327, 328], [333, 337]];
for (let k = 0; k < 352; k++)
  s += rect(94 + 4 * k, 695, 3, 48, falling.some(([a, b]) => k >= a && k <= b) ? '#9932cc' : '#2e8b57');

// frame and axes
s += rect(94, 42, 1769, 1, '#fff') + rect(1862, 42, 1, 651, '#fff') + rect(94, 692, 1769, 1, '#fff') +
  rect(94, 694, 1769, 1, '#fff') + rect(1862, 694, 1, 51, '#fff') + rect(94, 744, 1769, 1, '#fff') +
  rect(94, 42, 1, 651, '#fff') + rect(1863, 696, 1, 1, '#fff') + rect(1863, 743, 1, 1, '#fff');
'191.825 191.565 191.310 191.055 190.795 190.540 190.280 190.025 189.765 189.510 189.255 188.995 188.740 188.480 188.225 187.965 187.710 187.450 187.195 186.940'
  .split(' ').forEach((v, i) => { const y = 62 + 33 * i; s += rect(1863, y, 2, 1, '#fff') + label(1868, y + 4, 33, v); });
s += rect(1864, 120, 41, 11, '#fff') + label(1868, 129, 33, '191.336', 'style="fill:#000"');
s += label(1866, 705, 5, '1') + label(1866, 741, 5, '0');
['6 Feb 2025', '7 Feb 03:00', '7 Feb 07:00', '7 Feb 11:00', '7 Feb 15:00', '7 Feb 19:00', '7 Feb 23:00', '10 Feb 03:15', '10 Feb 07:15', '10 Feb 11:15', '10 Feb 15:15', '10 Feb 19:15', '10 Feb 23:15', '11 Feb 03:30', '11 Feb 07:30', '11 Feb 11:30', '11 Feb 15:30', '11 Feb 19:30', '11 Feb 23:30', '12 Feb 03:45', '12 Feb 07:45', '12 Feb 11:45']
  .forEach((v, i) => { const x = 95 + 64 * i; s += rect(x, 745, 1, 3, '#fff') + label(x - 1, 757, i ? (i < 7 ? 50 : 55) : 47, v); });

// captions
s += '<path class="soft" d="M98 49h7.500l-3.700 4z" fill="#fff"/>' + label(110, 54, 56, 'GBPJPY,M15') + label(172, 54, 141, '190.999 191.378 190.752 191.336');
s += label(99, 707, 49, 'Cobra Filter') + label(1743.5, 55, 100.5, 'Cobra_Scalper_Manager');
s += '<g class="soft" fill="none" stroke="#fff"><circle cx="1851.500" cy="52" r="5"/><path d="M1849 53.500c1 2 4 2 5 0M1849.500 49.500v1.500M1853.500 49.500v1.500"/></g>';
s += '<path d="M1502 43h10l-5 5z" fill="#778899"/>';

// signals
const arrow = (x, y, flip) => `<path class="soft" transform="translate(${x} ${y}) scale(1 ${flip})" fill="#fff" d="M-7-6l2.500-1.500L3 .5V-5.500L7-7V7.500H-4L-7 4.500H-.5L-7.500-4z"/>`;
s += label(360, 263, 46, 'SELL', `class="sig" style="fill:${P}"`) + label(708.5, 332, 45, 'SELL', `class="sig" style="fill:${P}"`) + label(237.5, 623, 36.5, 'BUY', `class="sig" style="fill:${G}"`);
s += arrow(384, 293.5, 1) + arrow(731, 361.5, 1) + arrow(256, 578.5, -1);
document.getElementById('plot').innerHTML = s;
```
